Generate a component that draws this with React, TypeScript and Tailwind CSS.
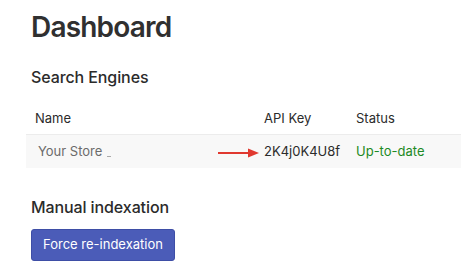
import React from 'react';

const Arrow: React.FC = () => (
  <svg width="42" height="10" viewBox="0 0 42 10" className="shrink-0">
    <line x1="0" y1="5" x2="32" y2="5" stroke="#e0382f" strokeWidth="2" />
    <path d="M30 0.5 L41 5 L30 9.5 Z" fill="#e0382f" />
  </svg>
);

export default function App() {
  return (
    <div className="w-[461px] h-[274px] bg-white text-[#2b2b2b] overflow-hidden" style={{ fontFamily: 'Inter, "Liberation Sans", sans-serif' }}>
      <div className="pl-[31px] pt-[11px]">
        <h1 className="text-[28px] font-semibold leading-[32px] tracking-[-0.8px] text-[#303030]">Dashboard</h1>
        <h2 className="mt-[24px] text-[16px] font-medium leading-[20px] tracking-[-0.1px]">Search Engines</h2>

        <div className="mt-[16px] -ml-[5px]">
          <div className="flex h-[31px] items-center text-[13px] text-[#2b2b2b]">
            <div className="w-[238px] pl-[9px]">Name</div>
            <div className="w-[92px]">API Key</div>
            <div>Status</div>
          </div>
          <div className="flex h-[34px] items-center border-t border-[#ececec] bg-[#f8f8f8] text-[13px]">
            <div className="flex w-[192px] items-center pl-[12px] text-[#6b6b6b]">
              <span>Your Store</span>
              <span className="ml-[5px] mt-[10px] block h-px w-[4px] bg-[#aaa]" />
            </div>
            <div className="flex w-[46px] items-center pt-[2px]"><Arrow /></div>
            <div className="w-[92px] text-[#2b2b2b]">2K4j0K4U8f</div>
            <div className="text-[#1d8a24]">Up-to-date</div>
          </div>
        </div>

        <h2 className="mt-[29px] text-[16px] font-medium leading-[20px] tracking-[-0.1px]">Manual indexation</h2>
        <button className="mt-[12px] h-[32px] w-[144px] rounded-[3px] border border-[#3e4ea6] bg-[#4b5cb8] text-[13px] text-white">
          Force re-indexation
        </button>
      </div>
    </div>
  );
}
